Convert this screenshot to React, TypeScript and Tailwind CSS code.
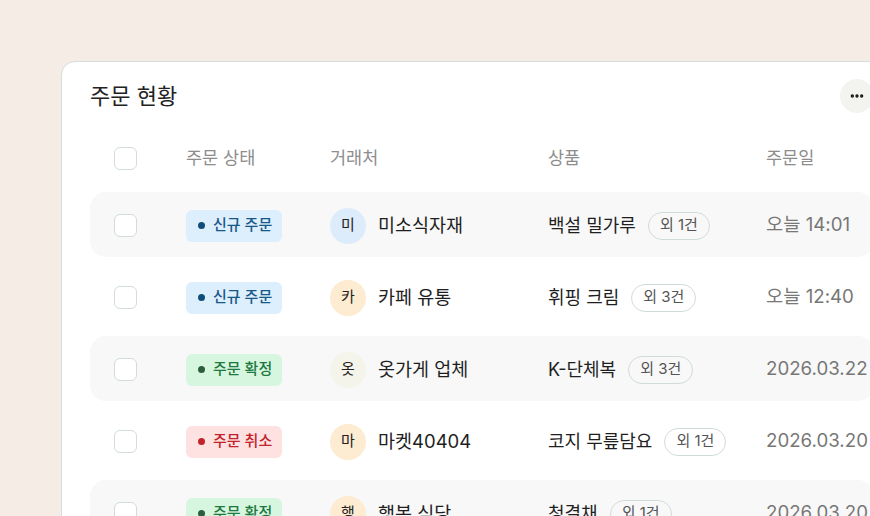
import { MoreHorizontal } from "lucide-react";

type Status = "new" | "confirmed" | "canceled";

const statusStyles: Record<Status, { label: string; box: string; dot: string }> = {
  new: { label: "신규 주문", box: "bg-[#ddeefc] text-[#17588a]", dot: "bg-[#0e4e78]" },
  confirmed: { label: "주문 확정", box: "bg-[#d7f6e0] text-[#1d7a3f]", dot: "bg-[#2b5f3c]" },
  canceled: { label: "주문 취소", box: "bg-[#fee1e1] text-[#c1232b]", dot: "bg-[#c1232b]" },
};

const orders = [
  { status: "new" as Status, initial: "미", avatar: "bg-[#ddecfb]", vendor: "미소식자재", product: "백설 밀가루", extra: "외 1건", date: "오늘 14:01" },
  { status: "new" as Status, initial: "카", avatar: "bg-[#fdebd2]", vendor: "카페 유통", product: "휘핑 크림", extra: "외 3건", date: "오늘 12:40" },
  { status: "confirmed" as Status, initial: "옷", avatar: "bg-[#f4f4ea]", vendor: "옷가게 업체", product: "K-단체복", extra: "외 3건", date: "2026.03.22" },
  { status: "canceled" as Status, initial: "마", avatar: "bg-[#fdebd2]", vendor: "마켓40404", product: "코지 무릎담요", extra: "외 1건", date: "2026.03.20" },
  { status: "confirmed" as Status, initial: "행", avatar: "bg-[#fdebd2]", vendor: "행복 식당", product: "청결채", extra: "외 1건", date: "2026.03.20" },
];

function Checkbox() {
  return <div className="h-[23px] w-[23px] rounded-md border-[1.5px] border-[#d2dcdb] bg-white" />;
}

const cols = "grid grid-cols-[72px_144px_218px_218px_1fr] items-center";

export default function App() {
  return (
    <div
      className="h-screen w-full overflow-hidden bg-[#f6ece6] pl-[61px] pt-[61px]"
      style={{ fontFamily: 'Inter, "Noto Sans CJK KR", sans-serif' }}
    >
      <div className="h-[520px] w-[842px] rounded-tl-[14px] border border-[#d6dddd] bg-white px-[28px] pt-[17px]">
        {/* Title */}
        <div className="flex h-[34px] items-center justify-between">
          <h1 className="text-[22px] font-normal text-[#222]">주문 현황</h1>
          <button className="flex h-[34px] w-[34px] items-center justify-center rounded-full bg-[#f3f3ef] text-[#111]">
            <MoreHorizontal className="h-4 w-4" strokeWidth={3} />
          </button>
        </div>

        {/* Header */}
        <div className={`${cols} mt-[23px] h-[44px] pl-6 text-[17.5px] text-[#8d8d8d]`}>
          <Checkbox />
          <span>주문 상태</span>
          <span>거래처</span>
          <span>상품</span>
          <span>주문일</span>
        </div>

        {/* Rows */}
        <div className="mt-3 flex flex-col gap-[7px]">
          {orders.map((o, i) => {
            const s = statusStyles[o.status];
            return (
              <div
                key={i}
                className={`${cols} h-[65px] rounded-2xl pl-6 pt-[2px] ${i % 2 === 0 ? "bg-[#f8f8f8]" : "bg-white"}`}
              >
                <Checkbox />
                <div>
                  <span className={`inline-flex h-8 items-center gap-[8px] rounded-md pl-3 pr-[10px] text-[15px] font-medium ${s.box}`}>
                    <span className={`h-[7px] w-[7px] rounded-full ${s.dot}`} />
                    {s.label}
                  </span>
                </div>
                <div className="flex items-center gap-3">
                  <span className={`flex h-9 w-9 items-center justify-center rounded-full text-[15px] text-[#222] ${o.avatar}`}>
                    {o.initial}
                  </span>
                  <span className="text-[18.5px] text-[#1f1f1f]">{o.vendor}</span>
                </div>
                <div className="flex items-center gap-3">
                  <span className="text-[18px] text-[#1f1f1f]">{o.product}</span>
                  <span className="flex h-7 items-center rounded-full border border-[#cfdcd8] px-[11px] text-[15px] text-[#555]">
                    {o.extra}
                  </span>
                </div>
                <span className="whitespace-nowrap text-[18.7px] text-[#777]">{o.date}</span>
              </div>
            );
          })}
        </div>
      </div>
    </div>
  );
}
